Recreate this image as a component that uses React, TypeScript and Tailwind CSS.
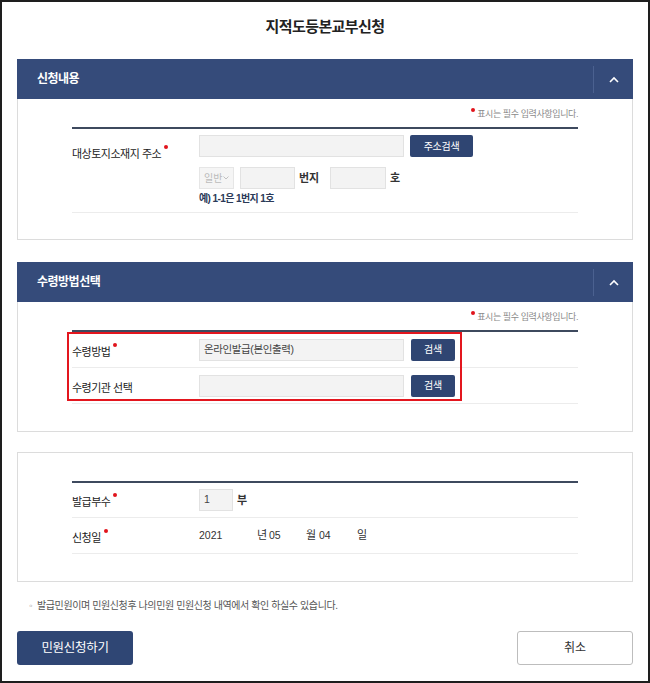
import React from "react";

const font = "font-['Liberation_Sans','Noto_Sans_CJK_KR',sans-serif]";

function Dot() {
    return <span className="absolute -right-[7px] -top-[3px] w-[4px] h-[4px] rounded-full bg-[#e1141c]" />;
}

function Label({ text, req }: { text: string; req?: boolean }) {
    return (
        <span className="relative text-[11px] leading-[14px] text-[#222] tracking-[-0.5px]">
            {text}
            {req && <Dot />}
        </span>
    );
}

function Header({ title }: { title: string }) {
    return (
        <div className="flex items-center h-[40px] bg-[#354b7a]">
            <div className="flex-1 pl-[20px] text-[12px] font-bold text-white tracking-[-0.5px]">{title}</div>
            <div className="w-px h-[27px] bg-[#4b6190]" />
            <div className="w-[39px] flex items-center justify-center">
                <svg width="10" height="7" viewBox="0 0 10 7">
                    <polyline points="1,6 5,2 9,6" fill="none" stroke="white" strokeWidth="1.6" />
                </svg>
            </div>
        </div>
    );
}

function Notice() {
    return (
        <div className="flex justify-end h-[14px] mb-[6px]">
            <span className="relative pl-[6px] text-[9px] leading-[14px] text-[#8a8a8a] tracking-[-0.4px]">
                <span className="absolute left-0 top-[1px] w-[4px] h-[4px] rounded-full bg-[#e1141c]" />
                표시는 필수 입력사항입니다.
            </span>
        </div>
    );
}

function Input({ w, value }: { w: string; value?: string }) {
    return (
        <div className={`${w} h-[22px] flex items-center pl-[4px] bg-[#f3f3f3] border border-[#e2e2e2] text-[10.5px] text-[#444] tracking-[-0.4px]`}>
            {value}
        </div>
    );
}

function NavyBtn({ w, text }: { w: string; text: string }) {
    return (
        <div className={`${w} h-[22px] flex items-center justify-center bg-[#2f4572] rounded-[2px] text-[10px] text-white tracking-[-0.3px]`}>
            {text}
        </div>
    );
}

export default function App() {
    return (
        <div className={`${font} w-[650px] h-[683px] border-2 border-[#1e1e1e] bg-white px-[15px] flex flex-col`}>
            <div className="pt-[14px] mb-[21px] text-center text-[15px] leading-[22px] font-bold text-[#222] tracking-[-0.6px]">
                지적도등본교부신청
            </div>

            {/* 신청내용 */}
            <div>
                <Header title="신청내용" />
                <div className="border-x border-b border-[#dcdcdc] px-[54px] pt-[8px] pb-[26px]">
                    <Notice />
                    <div className="border-t-2 border-[#3e4a5e]">
                        <div className="flex border-b border-[#ececec] pt-[6px] pb-[6px]">
                            <div className="w-[127px] pt-[6px]">
                                <Label text="대상토지소재지 주소" req />
                            </div>
                            <div className="flex flex-col">
                                <div className="flex gap-[6px]">
                                    <Input w="w-[205px]" />
                                    <NavyBtn w="w-[63px]" text="주소검색" />
                                </div>
                                <div className="flex items-center mt-[10px]">
                                    <div className="w-[35px] h-[22px] flex items-center justify-between px-[4px] bg-[#f5f5f5] border border-[#e6e6e6] text-[10px] text-[#bbb]">
                                        일반
                                        <svg width="6" height="4" viewBox="0 0 6 4">
                                            <polyline points="0.5,0.5 3,3 5.5,0.5" fill="none" stroke="#bbb" strokeWidth="0.9" />
                                        </svg>
                                    </div>
                                    <div className="ml-[6px]"><Input w="w-[55px]" /></div>
                                    <span className="ml-[4px] w-[31px] text-[11px] font-bold text-[#333]">번지</span>
                                    <Input w="w-[56px]" />
                                    <span className="ml-[4px] text-[11px] font-bold text-[#333]">호</span>
                                </div>
                                <div className="mt-[3px] text-[10px] leading-[14px] font-bold text-[#2b3a58] tracking-[-0.6px]">
                                    예) 1-1은 1번지 1호
                                </div>
                            </div>
                        </div>
                    </div>
                </div>
            </div>

            {/* 수령방법선택 */}
            <div className="mt-[22px]">
                <Header title="수령방법선택" />
                <div className="border-x border-b border-[#dcdcdc] px-[54px] pt-[8px] pb-[27px]">
                    <Notice />
                    <div className="border-t-2 border-[#3e4a5e]">
                        <div className="relative">
                            <div className="flex items-center h-[36px] border-b border-[#ececec]">
                                <div className="w-[127px] pt-[2px]"><Label text="수령방법" req /></div>
                                <Input w="w-[205px]" value="온라인발급(본인출력)" />
                                <div className="ml-[7px]"><NavyBtn w="w-[44px]" text="검색" /></div>
                            </div>
                            <div className="flex items-center h-[36px] border-b border-[#ececec]">
                                <div className="w-[127px] pt-[2px]"><Label text="수령기관 선택" /></div>
                                <Input w="w-[205px]" />
                                <div className="ml-[7px]"><NavyBtn w="w-[44px]" text="검색" /></div>
                            </div>
                            <div className="absolute -left-[5px] top-0 w-[395px] h-[69px] border-2 border-[#e3161e]" />
                        </div>
                    </div>
                </div>
            </div>

            {/* 발급부수 / 신청일 */}
            <div className="mt-[20px] border border-[#dcdcdc] px-[54px] pt-[28px] pb-[27px]">
                <div className="border-t-2 border-[#3e4a5e]">
                    <div className="flex items-center h-[35px] border-b border-[#ececec]">
                        <div className="w-[127px] pt-[2px]"><Label text="발급부수" req /></div>
                        <Input w="w-[34px]" value="1" />
                        <span className="ml-[4px] text-[11px] font-bold text-[#333]">부</span>
                    </div>
                    <div className="flex items-center h-[36px] border-b border-[#ececec]">
                        <div className="w-[127px] pt-[2px]"><Label text="신청일" req /></div>
                        <div className="flex items-center text-[10.5px] text-[#333]">
                            <span className="w-[58px]">2021</span>
                            <span className="w-[12px] text-[11px]">년</span>
                            <span className="w-[37px]">05</span>
                            <span className="w-[13px] text-[11px]">월</span>
                            <span className="w-[38px]">04</span>
                            <span className="text-[11px]">일</span>
                        </div>
                    </div>
                </div>
            </div>

            <div className="mt-[16px] pl-[12px] flex items-center h-[14px] text-[10px] text-[#555] tracking-[-0.4px]">
                <span className="w-[8px] text-[#999]">◦</span>
                발급민원이며 민원신청후 나의민원 민원신청 내역에서 확인 하실수 있습니다.
            </div>

            <div className="mt-[19px] flex justify-between">
                <div className="w-[116px] h-[34px] flex items-center justify-center bg-[#2f4674] rounded-[3px] text-[12.5px] text-white tracking-[-0.3px]">
                    민원신청하기
                </div>
                <div className="w-[116px] h-[34px] flex items-center justify-center bg-white border border-[#bdbdbd] rounded-[3px] text-[12px] text-[#333]">
                    취소
                </div>
            </div>
        </div>
    );
}
